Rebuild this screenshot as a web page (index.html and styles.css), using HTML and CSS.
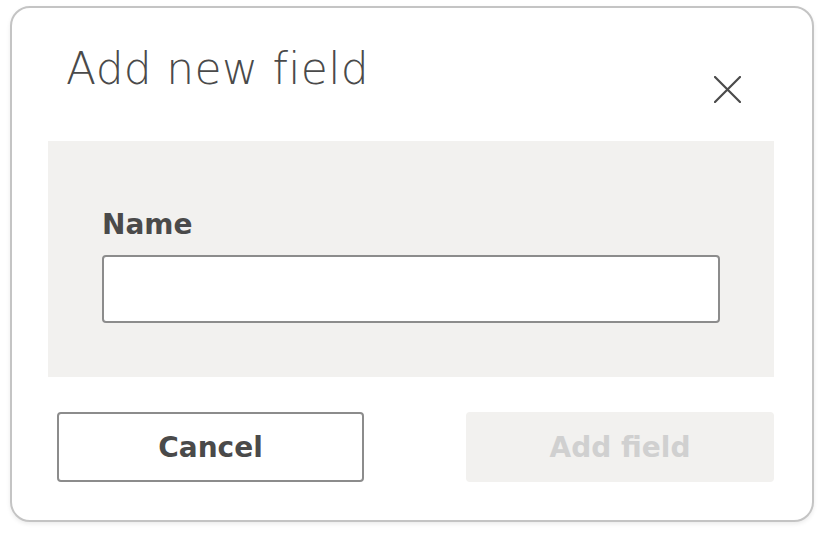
FILE: index.html
```html
<!DOCTYPE html>
<html lang="en">
<head>
<meta charset="utf-8">
<title>Add new field</title>
<link rel="stylesheet" href="styles.css">
</head>
<body>
<div class="dialog">
  <div class="header">
    <h1 class="title">Add new field</h1>
    <button class="close" aria-label="Close">
      <svg width="27" height="27" viewBox="0 0 27 27"><path d="M1 1 L26 26 M26 1 L1 26" stroke="#4a4a4a" stroke-width="2.2" stroke-linecap="round" fill="none"/></svg>
    </button>
  </div>
  <div class="panel">
    <label class="label" for="name">Name</label>
    <input class="input" id="name" type="text">
  </div>
  <div class="actions">
    <button class="btn btn-cancel">Cancel</button>
    <button class="btn btn-add" disabled>Add field</button>
  </div>
</div>
</body>
</html>
```
FILE: styles.css
```css
html, body { margin: 0; padding: 0; background: #fff; }
body {
  padding: 6px 10px;
  font-family: "DejaVu Sans", "Open Sans", sans-serif;
  color: #4a4a4a;
}
.dialog {
  box-sizing: border-box;
  width: 804px;
  height: 516px;
  border: 2px solid #c4c4c4;
  border-radius: 20px;
  box-shadow: 0 2px 4px rgba(0,0,0,0.08);
  background: #fff;
  display: flex;
  flex-direction: column;
}
.header {
  height: 133px;
  box-sizing: border-box;
  display: flex;
  justify-content: space-between;
  align-items: flex-start;
  padding: 35px 71px 0 54px;
}
.title {
  margin: 0;
  font-family: "DejaVu Sans", "Open Sans", sans-serif;
  font-size: 44px;
  line-height: 52px;
  letter-spacing: 0.3px;
  font-weight: 200;
  color: #4a4a4a;
}
.close {
  border: 0;
  background: none;
  padding: 0;
  margin-top: 33px;
  width: 27px;
  height: 27px;
  display: block;
}
.close svg { display: block; }
.panel {
  margin: 0 38px 0 36px;
  background: #f2f1ef;
  padding: 66px 54px 54px 54px;
  display: flex;
  flex-direction: column;
}
.label {
  font-size: 28px;
  font-weight: 700;
  line-height: 36px;
  margin-bottom: 12px;
  color: #4a4a4a;
}
.input {
  box-sizing: border-box;
  height: 68px;
  width: 100%;
  border: 2px solid #8c8c8c;
  border-radius: 4px;
  background: #fff;
  margin: 0;
}
.actions {
  display: flex;
  justify-content: space-between;
  margin: 35px 38px 0 45px;
}
.btn {
  box-sizing: border-box;
  width: 307px;
  height: 70px;
  border-radius: 4px;
  font-family: inherit;
  font-size: 28px;
  font-weight: 700;
}
.btn-cancel {
  border: 2px solid #8c8c8c;
  background: #fff;
  color: #4a4a4a;
}
.btn-add {
  width: 308px;
  border: 0;
  background: #f2f1ef;
  color: #d0d0d0;
}
```
